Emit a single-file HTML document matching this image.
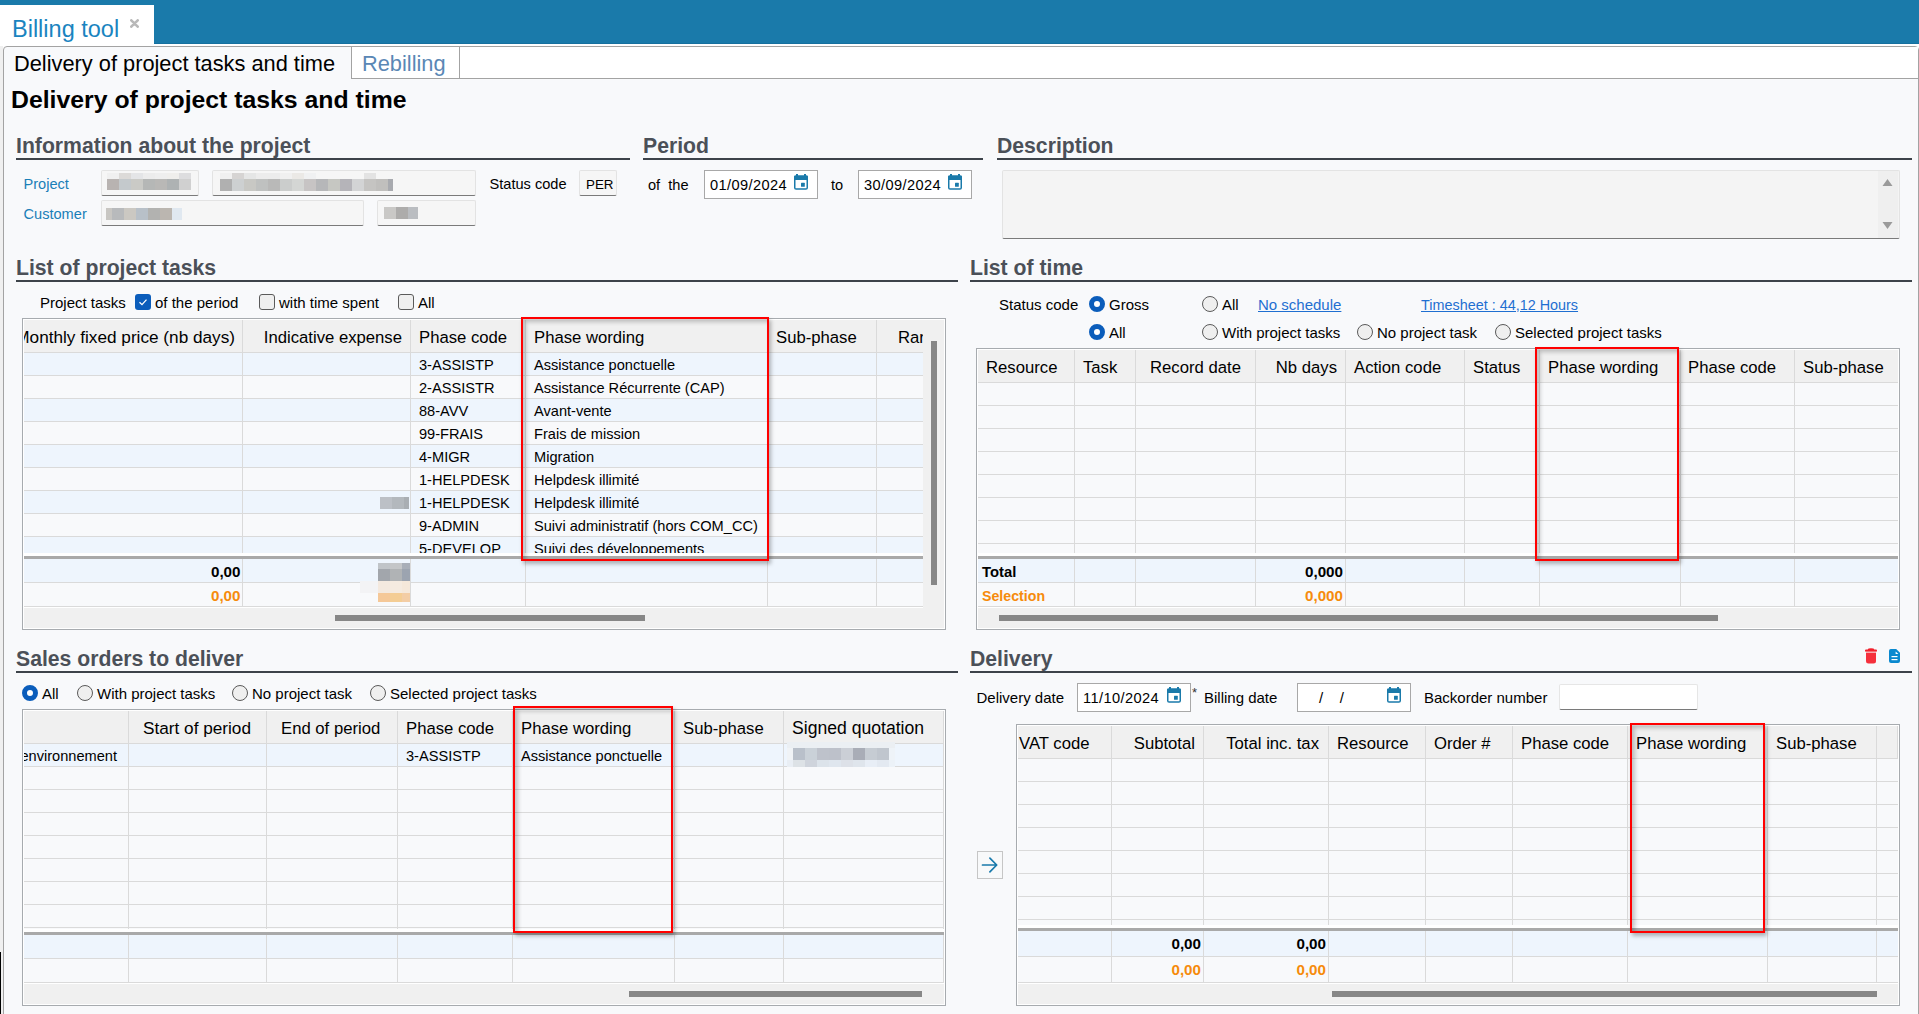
<!DOCTYPE html>
<html><head><meta charset="utf-8"><style>
html,body{margin:0;padding:0;width:1919px;height:1014px;overflow:hidden;background:#fff;font-family:"Liberation Sans", sans-serif;}
body>div,body>svg{position:absolute;}
</style></head><body>
<div style="left:0px;top:0px;width:1919px;height:44px;background:#1a7aaa"></div>
<div style="left:0px;top:43px;width:1919px;height:1px;background:#15709f"></div>
<div style="left:0px;top:5px;width:154px;height:40px;background:#fff"></div>
<div style="left:0px;top:44px;width:1919px;height:2px;background:#fff"></div>
<div style="left:12px;top:18.11px;font-size:23.5px;line-height:23.5px;color:#1a84c0;font-weight:400;white-space:nowrap;">Billing tool</div>
<svg style="left:130px;top:19px" width="9" height="9" viewBox="0 0 9 9"><path d="M1.3 1.3 L7.7 7.7 M7.7 1.3 L1.3 7.7" stroke="#b9b9b9" stroke-width="2.6" stroke-linecap="round"/></svg>
<div style="left:0px;top:46px;width:3px;height:968px;background:#f0f0f0"></div>
<div style="left:3px;top:46px;width:1916px;height:980px;background:#f8f9fb;border:1px solid #a3a3a3;border-radius:4px 4px 0 0;box-sizing:border-box"></div>
<div style="left:351px;top:47px;width:1567px;height:31px;background:#fff"></div>
<div style="left:351px;top:78px;width:1568px;height:1px;background:#a3a3a3"></div>
<div style="left:351px;top:47px;width:1px;height:32px;background:#a3a3a3"></div>
<div style="left:459px;top:47px;width:1px;height:32px;background:#a3a3a3"></div>
<div style="left:14px;top:52.55px;font-size:21.8px;line-height:21.8px;color:#000;font-weight:400;white-space:nowrap;">Delivery of project tasks and time</div>
<div style="left:362px;top:52.55px;font-size:21.8px;line-height:21.8px;color:#5a87b5;font-weight:400;white-space:nowrap;">Rebilling</div>
<div style="left:11px;top:87.51px;font-size:24.8px;line-height:24.8px;color:#000;font-weight:700;white-space:nowrap;">Delivery of project tasks and time</div>
<div style="left:16px;top:134.80px;font-size:21.2px;line-height:21.2px;color:#4b5058;font-weight:700;white-space:nowrap;">Information about the project</div>
<div style="left:16px;top:157.75px;width:614px;height:2px;background:#3d434a"></div>
<div style="left:643px;top:134.80px;font-size:21.2px;line-height:21.2px;color:#4b5058;font-weight:700;white-space:nowrap;">Period</div>
<div style="left:643px;top:157.75px;width:340px;height:2px;background:#3d434a"></div>
<div style="left:997px;top:134.80px;font-size:21.2px;line-height:21.2px;color:#4b5058;font-weight:700;white-space:nowrap;">Description</div>
<div style="left:997px;top:157.75px;width:915px;height:2px;background:#3d434a"></div>
<div style="left:23.5px;top:176.64px;font-size:14.6px;line-height:14.6px;color:#1a7fb8;font-weight:400;white-space:nowrap;">Project</div>
<div style="left:23.5px;top:206.64px;font-size:14.6px;line-height:14.6px;color:#1a7fb8;font-weight:400;white-space:nowrap;">Customer</div>
<div style="left:101px;top:170px;width:98px;height:26px;background:#f6f6f6;border:1px solid #e3e3e3;border-bottom:1px solid #7a7a7a;border-radius:2px;box-sizing:border-box"></div>
<div style="left:212px;top:170px;width:264px;height:26px;background:#f6f6f6;border:1px solid #e3e3e3;border-bottom:1px solid #7a7a7a;border-radius:2px;box-sizing:border-box"></div>
<div style="left:101px;top:200px;width:263px;height:26px;background:#f6f6f6;border:1px solid #e3e3e3;border-bottom:1px solid #7a7a7a;border-radius:2px;box-sizing:border-box"></div>
<div style="left:377px;top:200px;width:99px;height:26px;background:#f6f6f6;border:1px solid #e3e3e3;border-bottom:1px solid #7a7a7a;border-radius:2px;box-sizing:border-box"></div>
<div style="left:107px;top:173px;width:12px;height:6px;background:#f0f0f0"></div>
<div style="left:119px;top:173px;width:12px;height:6px;background:#dcdad8"></div>
<div style="left:131px;top:173px;width:12px;height:6px;background:#e4e5e7"></div>
<div style="left:143px;top:173px;width:12px;height:6px;background:#ececec"></div>
<div style="left:155px;top:173px;width:12px;height:6px;background:#eeeeee"></div>
<div style="left:167px;top:173px;width:12px;height:6px;background:#efeeec"></div>
<div style="left:179px;top:173px;width:12px;height:6px;background:#dddddf"></div>
<div style="left:107px;top:179px;width:12px;height:11px;background:#b8b3b1"></div>
<div style="left:119px;top:179px;width:12px;height:11px;background:#c4c9cc"></div>
<div style="left:131px;top:179px;width:12px;height:11px;background:#cacac6"></div>
<div style="left:143px;top:179px;width:12px;height:11px;background:#b5b7b6"></div>
<div style="left:155px;top:179px;width:12px;height:11px;background:#b9b8b6"></div>
<div style="left:167px;top:179px;width:12px;height:11px;background:#aeb2b3"></div>
<div style="left:179px;top:179px;width:12px;height:11px;background:#d0d0d0"></div>
<div style="left:220px;top:173px;width:12px;height:6px;background:#f0f0f0"></div>
<div style="left:232px;top:173px;width:12px;height:6px;background:#d6d4d3"></div>
<div style="left:244px;top:173px;width:12px;height:6px;background:#e5e6e6"></div>
<div style="left:256px;top:173px;width:12px;height:6px;background:#ececec"></div>
<div style="left:268px;top:173px;width:12px;height:6px;background:#ececec"></div>
<div style="left:280px;top:173px;width:12px;height:6px;background:#f0f0f0"></div>
<div style="left:292px;top:173px;width:12px;height:6px;background:#ebe9e6"></div>
<div style="left:304px;top:173px;width:12px;height:6px;background:#f0f1f2"></div>
<div style="left:364px;top:173px;width:12px;height:6px;background:#e3e3e3"></div>
<div style="left:220px;top:179px;width:12px;height:12px;background:#b0b0b0"></div>
<div style="left:232px;top:179px;width:12px;height:12px;background:#cdd0d1"></div>
<div style="left:244px;top:179px;width:12px;height:12px;background:#c8c8c4"></div>
<div style="left:256px;top:179px;width:12px;height:12px;background:#bfc1c0"></div>
<div style="left:268px;top:179px;width:12px;height:12px;background:#b9b9b8"></div>
<div style="left:280px;top:179px;width:12px;height:12px;background:#cbcdcc"></div>
<div style="left:292px;top:179px;width:12px;height:12px;background:#d4d6d4"></div>
<div style="left:304px;top:179px;width:12px;height:12px;background:#c7c4c4"></div>
<div style="left:316px;top:179px;width:12px;height:12px;background:#b6b7b9"></div>
<div style="left:328px;top:179px;width:12px;height:12px;background:#c6c7c2"></div>
<div style="left:340px;top:179px;width:12px;height:12px;background:#b5b4b9"></div>
<div style="left:352px;top:179px;width:12px;height:12px;background:#d3d4d5"></div>
<div style="left:364px;top:179px;width:12px;height:12px;background:#c5c4c2"></div>
<div style="left:376px;top:179px;width:12px;height:12px;background:#c0bfbd"></div>
<div style="left:388px;top:179px;width:5px;height:12px;background:#a8aaaf"></div>
<div style="left:106px;top:208px;width:6px;height:12px;background:#c8c6c2"></div>
<div style="left:112px;top:208px;width:12px;height:12px;background:#b8babc"></div>
<div style="left:124px;top:208px;width:12px;height:12px;background:#cbc8c2"></div>
<div style="left:136px;top:208px;width:12px;height:12px;background:#b8c0c8"></div>
<div style="left:148px;top:208px;width:12px;height:12px;background:#b2b2b0"></div>
<div style="left:160px;top:208px;width:12px;height:12px;background:#bbb6b0"></div>
<div style="left:172px;top:208px;width:10px;height:12px;background:#e0e8f0"></div>
<div style="left:384px;top:207px;width:12px;height:12px;background:#c9c8c6"></div>
<div style="left:396px;top:207px;width:12px;height:12px;background:#adacab"></div>
<div style="left:408px;top:207px;width:10px;height:12px;background:#babdc1"></div>
<div style="left:489.5px;top:176.64px;font-size:14.6px;line-height:14.6px;color:#000;font-weight:400;white-space:nowrap;">Status code</div>
<div style="left:579px;top:170px;width:38px;height:26px;background:#f6f6f6;border:1px solid #e3e3e3;border-bottom:1px solid #7a7a7a;border-radius:2px;box-sizing:border-box"></div>
<div style="left:586px;top:177.66px;font-size:13.4px;line-height:13.4px;color:#000;font-weight:400;white-space:nowrap;">PER</div>
<div style="left:648px;top:177.64px;font-size:14.6px;line-height:14.6px;color:#000;font-weight:400;white-space:nowrap;">of&nbsp; the</div>
<div style="left:831px;top:177.64px;font-size:14.6px;line-height:14.6px;color:#000;font-weight:400;white-space:nowrap;">to</div>
<div style="left:704px;top:170px;width:114px;height:29px;background:#fff;border:1px solid #a8a8a8;box-sizing:border-box"></div>
<div style="left:710px;top:177.64px;font-size:14.6px;line-height:14.6px;color:#000;font-weight:400;white-space:nowrap;letter-spacing:0.4px">01/09/2024</div>
<svg style="left:794px;top:174px" width="14" height="16" viewBox="0 0 14 16"><rect x="0.75" y="2.35" width="12.5" height="12.7" rx="1.3" fill="none" stroke="#1a7aaa" stroke-width="1.5"/><rect x="0" y="1.6" width="14" height="4.4" rx="1" fill="#1a7aaa"/><rect x="2" y="0" width="2" height="2.5" fill="#1a7aaa"/><rect x="10" y="0" width="2" height="2.5" fill="#1a7aaa"/><rect x="7" y="8.8" width="3.8" height="3.9" rx="0.5" fill="#1a7aaa"/></svg>
<div style="left:858px;top:170px;width:114px;height:29px;background:#fff;border:1px solid #a8a8a8;box-sizing:border-box"></div>
<div style="left:864px;top:177.64px;font-size:14.6px;line-height:14.6px;color:#000;font-weight:400;white-space:nowrap;letter-spacing:0.4px">30/09/2024</div>
<svg style="left:948px;top:174px" width="14" height="16" viewBox="0 0 14 16"><rect x="0.75" y="2.35" width="12.5" height="12.7" rx="1.3" fill="none" stroke="#1a7aaa" stroke-width="1.5"/><rect x="0" y="1.6" width="14" height="4.4" rx="1" fill="#1a7aaa"/><rect x="2" y="0" width="2" height="2.5" fill="#1a7aaa"/><rect x="10" y="0" width="2" height="2.5" fill="#1a7aaa"/><rect x="7" y="8.8" width="3.8" height="3.9" rx="0.5" fill="#1a7aaa"/></svg>
<div style="left:1002px;top:170px;width:898px;height:69px;background:#f4f4f4;border:1px solid #e3e3e3;border-bottom:1px solid #7a7a7a;border-radius:2px;box-sizing:border-box"></div>
<div style="left:1878px;top:171px;width:20px;height:67px;background:#efefef"></div>
<svg style="left:1882px;top:177px" width="11" height="10"><path d="M0.5 9 L5.5 2 L10.5 9 Z" fill="#9a9a9a"/></svg>
<svg style="left:1882px;top:221px" width="11" height="10"><path d="M0.5 1 L5.5 8 L10.5 1 Z" fill="#9a9a9a"/></svg>
<div style="left:16px;top:256.85px;font-size:21.2px;line-height:21.2px;color:#4b5058;font-weight:700;white-space:nowrap;">List of project tasks</div>
<div style="left:16px;top:279.8px;width:942px;height:2px;background:#3d434a"></div>
<div style="left:40px;top:295.30px;font-size:15.0px;line-height:15.0px;color:#000;font-weight:400;white-space:nowrap;">Project tasks</div>
<div style="left:135px;top:294px;width:16px;height:16px;background:#0b5dbb;border-radius:3px"></div>
<svg style="left:135px;top:294px" width="16" height="16"><path d="M4.5 8.2 L7 10.6 L11.5 5.6" fill="none" stroke="#fff" stroke-width="1.3"/></svg>
<div style="left:155px;top:295.30px;font-size:15.0px;line-height:15.0px;color:#000;font-weight:400;white-space:nowrap;">of the period</div>
<div style="left:259px;top:294px;width:16px;height:16px;background:#efefef;border:1px solid #5a5a5a;border-radius:3px;box-sizing:border-box"></div>
<div style="left:279px;top:295.30px;font-size:15.0px;line-height:15.0px;color:#000;font-weight:400;white-space:nowrap;">with time spent</div>
<div style="left:398px;top:294px;width:16px;height:16px;background:#efefef;border:1px solid #5a5a5a;border-radius:3px;box-sizing:border-box"></div>
<div style="left:418px;top:295.30px;font-size:15.0px;line-height:15.0px;color:#000;font-weight:400;white-space:nowrap;">All</div>
<div style="left:22px;top:318px;width:924px;height:312px;background:#fff;border:1px solid #a7abaf;box-sizing:border-box"></div>
<div style="left:24px;top:320px;width:899px;height:32px;background:#f0f0f0"></div>
<div style="left:24px;top:353px;width:899px;height:22px;background:#eef5fd"></div>
<div style="left:24px;top:375px;width:899px;height:1px;background:#dadada"></div>
<div style="left:24px;top:376px;width:899px;height:22px;background:#f8f9fb"></div>
<div style="left:24px;top:398px;width:899px;height:1px;background:#dadada"></div>
<div style="left:24px;top:399px;width:899px;height:22px;background:#eef5fd"></div>
<div style="left:24px;top:421px;width:899px;height:1px;background:#dadada"></div>
<div style="left:24px;top:422px;width:899px;height:22px;background:#f8f9fb"></div>
<div style="left:24px;top:444px;width:899px;height:1px;background:#dadada"></div>
<div style="left:24px;top:445px;width:899px;height:22px;background:#eef5fd"></div>
<div style="left:24px;top:467px;width:899px;height:1px;background:#dadada"></div>
<div style="left:24px;top:468px;width:899px;height:22px;background:#f8f9fb"></div>
<div style="left:24px;top:490px;width:899px;height:1px;background:#dadada"></div>
<div style="left:24px;top:491px;width:899px;height:22px;background:#eef5fd"></div>
<div style="left:24px;top:513px;width:899px;height:1px;background:#dadada"></div>
<div style="left:24px;top:514px;width:899px;height:22px;background:#f8f9fb"></div>
<div style="left:24px;top:536px;width:899px;height:1px;background:#dadada"></div>
<div style="left:24px;top:537px;width:899px;height:16px;background:#eef5fd"></div>
<div style="left:24px;top:352px;width:899px;height:1px;background:#dadada"></div>
<div style="left:24px;top:556px;width:899px;height:3px;background:#a9a9a9"></div>
<div style="left:24px;top:559px;width:899px;height:23px;background:#eef5fd"></div>
<div style="left:24px;top:582px;width:899px;height:1px;background:#dadada"></div>
<div style="left:24px;top:583px;width:899px;height:23px;background:#f8f9fb"></div>
<div style="left:24px;top:606px;width:899px;height:1px;background:#dadada"></div>
<div style="left:24px;top:608px;width:899px;height:20px;background:#f0f0f0"></div>
<div style="left:242px;top:320px;width:1px;height:32px;background:#dadada"></div>
<div style="left:410px;top:320px;width:1px;height:32px;background:#dadada"></div>
<div style="left:525px;top:320px;width:1px;height:32px;background:#dadada"></div>
<div style="left:767px;top:320px;width:1px;height:32px;background:#dadada"></div>
<div style="left:876px;top:320px;width:1px;height:32px;background:#dadada"></div>
<div style="left:242px;top:353px;width:1px;height:200px;background:#dadada"></div>
<div style="left:242px;top:559px;width:1px;height:47px;background:#dadada"></div>
<div style="left:410px;top:353px;width:1px;height:200px;background:#dadada"></div>
<div style="left:410px;top:559px;width:1px;height:47px;background:#dadada"></div>
<div style="left:525px;top:353px;width:1px;height:200px;background:#dadada"></div>
<div style="left:525px;top:559px;width:1px;height:47px;background:#dadada"></div>
<div style="left:767px;top:353px;width:1px;height:200px;background:#dadada"></div>
<div style="left:767px;top:559px;width:1px;height:47px;background:#dadada"></div>
<div style="left:876px;top:353px;width:1px;height:200px;background:#dadada"></div>
<div style="left:876px;top:559px;width:1px;height:47px;background:#dadada"></div>
<div style="left:335px;top:615px;width:310px;height:6px;background:#878787"></div>
<div style="left:923px;top:320px;width:21px;height:308px;background:#f0f0f0"></div>
<div style="left:931px;top:341px;width:6px;height:244px;background:#878787"></div>
<div style="left:24px;top:0;width:218px;height:1014px;overflow:hidden"><div style="position:absolute;left:-24px;top:0;width:1919px;height:1014px"><div style="position:absolute;left:-365px;top:329.44px;width:600px;text-align:right;font-size:17.2px;line-height:17.2px;color:#000;font-weight:400;white-space:nowrap">Monthly fixed price (nb days)</div></div></div>
<div style="left:-198px;top:329.86px;width:600px;text-align:right;font-size:16.7px;line-height:16.7px;color:#000;font-weight:400;white-space:nowrap;">Indicative expense</div>
<div style="left:419px;top:329.86px;font-size:16.7px;line-height:16.7px;color:#000;font-weight:400;white-space:nowrap;">Phase code</div>
<div style="left:534px;top:329.86px;font-size:16.7px;line-height:16.7px;color:#000;font-weight:400;white-space:nowrap;">Phase wording</div>
<div style="left:776px;top:329.86px;font-size:16.7px;line-height:16.7px;color:#000;font-weight:400;white-space:nowrap;">Sub-phase</div>
<div style="left:876px;top:0;width:47px;height:1014px;overflow:hidden"><div style="position:absolute;left:-876px;top:0;width:1919px;height:1014px"><div style="position:absolute;left:898px;top:329.86px;font-size:16.7px;line-height:16.7px;color:#000;font-weight:400;white-space:nowrap">Rar</div></div></div>
<div style="left:419px;top:358.24px;font-size:14.6px;line-height:14.6px;color:#000;font-weight:400;white-space:nowrap;">3-ASSISTP</div>
<div style="left:534px;top:358.24px;font-size:14.6px;line-height:14.6px;color:#000;font-weight:400;white-space:nowrap;">Assistance ponctuelle</div>
<div style="left:419px;top:381.24px;font-size:14.6px;line-height:14.6px;color:#000;font-weight:400;white-space:nowrap;">2-ASSISTR</div>
<div style="left:534px;top:381.24px;font-size:14.6px;line-height:14.6px;color:#000;font-weight:400;white-space:nowrap;">Assistance R&#233;currente (CAP)</div>
<div style="left:419px;top:404.24px;font-size:14.6px;line-height:14.6px;color:#000;font-weight:400;white-space:nowrap;">88-AVV</div>
<div style="left:534px;top:404.24px;font-size:14.6px;line-height:14.6px;color:#000;font-weight:400;white-space:nowrap;">Avant-vente</div>
<div style="left:419px;top:427.24px;font-size:14.6px;line-height:14.6px;color:#000;font-weight:400;white-space:nowrap;">99-FRAIS</div>
<div style="left:534px;top:427.24px;font-size:14.6px;line-height:14.6px;color:#000;font-weight:400;white-space:nowrap;">Frais de mission</div>
<div style="left:419px;top:450.24px;font-size:14.6px;line-height:14.6px;color:#000;font-weight:400;white-space:nowrap;">4-MIGR</div>
<div style="left:534px;top:450.24px;font-size:14.6px;line-height:14.6px;color:#000;font-weight:400;white-space:nowrap;">Migration</div>
<div style="left:419px;top:473.24px;font-size:14.6px;line-height:14.6px;color:#000;font-weight:400;white-space:nowrap;">1-HELPDESK</div>
<div style="left:534px;top:473.24px;font-size:14.6px;line-height:14.6px;color:#000;font-weight:400;white-space:nowrap;">Helpdesk illimit&#233;</div>
<div style="left:419px;top:496.24px;font-size:14.6px;line-height:14.6px;color:#000;font-weight:400;white-space:nowrap;">1-HELPDESK</div>
<div style="left:534px;top:496.24px;font-size:14.6px;line-height:14.6px;color:#000;font-weight:400;white-space:nowrap;">Helpdesk illimit&#233;</div>
<div style="left:419px;top:519.24px;font-size:14.6px;line-height:14.6px;color:#000;font-weight:400;white-space:nowrap;">9-ADMIN</div>
<div style="left:534px;top:519.24px;font-size:14.6px;line-height:14.6px;color:#000;font-weight:400;white-space:nowrap;">Suivi administratif (hors COM_CC)</div>
<div style="left:0;top:0;width:1919px;height:553px;overflow:hidden"><div style="position:absolute;left:419px;top:542.24px;font-size:14.6px;line-height:14.6px;color:#000;font-weight:400;white-space:nowrap">5-DEVELOP</div><div style="position:absolute;left:534px;top:542.24px;font-size:14.6px;line-height:14.6px;color:#000;font-weight:400;white-space:nowrap">Suivi des d&#233;veloppements</div></div>
<div style="left:380px;top:497px;width:12px;height:12px;background:#bcc0c6"></div>
<div style="left:392px;top:497px;width:12px;height:12px;background:#b3b8bd"></div>
<div style="left:404px;top:497px;width:5px;height:12px;background:#a9aeb3"></div>
<div style="left:-359.5px;top:564.13px;width:600px;text-align:right;font-size:15.2px;line-height:15.2px;color:#000;font-weight:700;white-space:nowrap;">0,00</div>
<div style="left:-359.5px;top:588.13px;width:600px;text-align:right;font-size:15.2px;line-height:15.2px;color:#f68b0c;font-weight:700;white-space:nowrap;">0,00</div>
<div style="left:378px;top:563px;width:12px;height:6px;background:#c0c4c8"></div>
<div style="left:390px;top:563px;width:12px;height:6px;background:#c4c6c8"></div>
<div style="left:402px;top:563px;width:8px;height:6px;background:#a8aeb8"></div>
<div style="left:378px;top:569px;width:12px;height:12px;background:#a2a6ac"></div>
<div style="left:390px;top:569px;width:12px;height:12px;background:#b0b3b5"></div>
<div style="left:402px;top:569px;width:8px;height:12px;background:#9ca4b0"></div>
<div style="left:360px;top:581px;width:18px;height:12px;background:#f3f3f5"></div>
<div style="left:378px;top:581px;width:12px;height:12px;background:#f4e9df"></div>
<div style="left:390px;top:581px;width:12px;height:12px;background:#f5ebe0"></div>
<div style="left:402px;top:581px;width:8px;height:12px;background:#f5e8da"></div>
<div style="left:378px;top:593px;width:12px;height:9px;background:#f5c898"></div>
<div style="left:390px;top:593px;width:12px;height:9px;background:#f4cd94"></div>
<div style="left:402px;top:593px;width:8px;height:9px;background:#f3cda5"></div>
<div style="left:521px;top:317px;width:248px;height:244px;border:2px solid #ff0000;box-sizing:border-box;box-shadow:2px 3px 4px rgba(0,0,0,0.28), inset 3px 3px 4px rgba(0,0,0,0.22)"></div>
<div style="left:970px;top:256.85px;font-size:21.2px;line-height:21.2px;color:#4b5058;font-weight:700;white-space:nowrap;">List of time</div>
<div style="left:970px;top:279.8px;width:942px;height:2px;background:#3d434a"></div>
<div style="left:999px;top:297.30px;font-size:15.0px;line-height:15.0px;color:#000;font-weight:400;white-space:nowrap;">Status code</div>
<div style="left:1089px;top:296px;width:16px;height:16px;background:#fff;border:5px solid #0b5dbb;border-radius:50%;box-sizing:border-box"></div>
<div style="left:1109px;top:297.30px;font-size:15.0px;line-height:15.0px;color:#000;font-weight:400;white-space:nowrap;">Gross</div>
<div style="left:1202px;top:296px;width:16px;height:16px;background:#efefef;border:1px solid #5a5a5a;border-radius:50%;box-sizing:border-box"></div>
<div style="left:1222px;top:297.30px;font-size:15.0px;line-height:15.0px;color:#000;font-weight:400;white-space:nowrap;">All</div>
<div style="left:1258px;top:297.30px;font-size:15.0px;line-height:15.0px;color:#1f6fd1;font-weight:400;white-space:nowrap;text-decoration:underline">No schedule</div>
<div style="left:1421px;top:297.81px;font-size:14.4px;line-height:14.4px;color:#1f6fd1;font-weight:400;white-space:nowrap;text-decoration:underline">Timesheet : 44,12 Hours</div>
<div style="left:1089px;top:324px;width:16px;height:16px;background:#fff;border:5px solid #0b5dbb;border-radius:50%;box-sizing:border-box"></div>
<div style="left:1109px;top:325.30px;font-size:15.0px;line-height:15.0px;color:#000;font-weight:400;white-space:nowrap;">All</div>
<div style="left:1202px;top:324px;width:16px;height:16px;background:#efefef;border:1px solid #5a5a5a;border-radius:50%;box-sizing:border-box"></div>
<div style="left:1222px;top:325.30px;font-size:15.0px;line-height:15.0px;color:#000;font-weight:400;white-space:nowrap;">With project tasks</div>
<div style="left:1357px;top:324px;width:16px;height:16px;background:#efefef;border:1px solid #5a5a5a;border-radius:50%;box-sizing:border-box"></div>
<div style="left:1377px;top:325.30px;font-size:15.0px;line-height:15.0px;color:#000;font-weight:400;white-space:nowrap;">No project task</div>
<div style="left:1495px;top:324px;width:16px;height:16px;background:#efefef;border:1px solid #5a5a5a;border-radius:50%;box-sizing:border-box"></div>
<div style="left:1515px;top:325.30px;font-size:15.0px;line-height:15.0px;color:#000;font-weight:400;white-space:nowrap;">Selected project tasks</div>
<div style="left:976px;top:348px;width:924px;height:282px;background:#fff;border:1px solid #a7abaf;box-sizing:border-box"></div>
<div style="left:978px;top:350px;width:920px;height:32px;background:#f0f0f0"></div>
<div style="left:978px;top:383px;width:920px;height:22px;background:#f8f9fb"></div>
<div style="left:978px;top:405px;width:920px;height:1px;background:#dadada"></div>
<div style="left:978px;top:406px;width:920px;height:22px;background:#f8f9fb"></div>
<div style="left:978px;top:428px;width:920px;height:1px;background:#dadada"></div>
<div style="left:978px;top:429px;width:920px;height:22px;background:#f8f9fb"></div>
<div style="left:978px;top:451px;width:920px;height:1px;background:#dadada"></div>
<div style="left:978px;top:452px;width:920px;height:22px;background:#f8f9fb"></div>
<div style="left:978px;top:474px;width:920px;height:1px;background:#dadada"></div>
<div style="left:978px;top:475px;width:920px;height:22px;background:#f8f9fb"></div>
<div style="left:978px;top:497px;width:920px;height:1px;background:#dadada"></div>
<div style="left:978px;top:498px;width:920px;height:22px;background:#f8f9fb"></div>
<div style="left:978px;top:520px;width:920px;height:1px;background:#dadada"></div>
<div style="left:978px;top:521px;width:920px;height:22px;background:#f8f9fb"></div>
<div style="left:978px;top:543px;width:920px;height:1px;background:#dadada"></div>
<div style="left:978px;top:544px;width:920px;height:9px;background:#f8f9fb"></div>
<div style="left:978px;top:382px;width:920px;height:1px;background:#dadada"></div>
<div style="left:978px;top:556px;width:920px;height:3px;background:#a9a9a9"></div>
<div style="left:978px;top:559px;width:920px;height:23px;background:#eef5fd"></div>
<div style="left:978px;top:582px;width:920px;height:1px;background:#dadada"></div>
<div style="left:978px;top:583px;width:920px;height:23px;background:#f8f9fb"></div>
<div style="left:978px;top:606px;width:920px;height:1px;background:#dadada"></div>
<div style="left:978px;top:608px;width:920px;height:20px;background:#f0f0f0"></div>
<div style="left:1074px;top:350px;width:1px;height:32px;background:#dadada"></div>
<div style="left:1135px;top:350px;width:1px;height:32px;background:#dadada"></div>
<div style="left:1255px;top:350px;width:1px;height:32px;background:#dadada"></div>
<div style="left:1345px;top:350px;width:1px;height:32px;background:#dadada"></div>
<div style="left:1464px;top:350px;width:1px;height:32px;background:#dadada"></div>
<div style="left:1539px;top:350px;width:1px;height:32px;background:#dadada"></div>
<div style="left:1680px;top:350px;width:1px;height:32px;background:#dadada"></div>
<div style="left:1794px;top:350px;width:1px;height:32px;background:#dadada"></div>
<div style="left:1074px;top:383px;width:1px;height:170px;background:#dadada"></div>
<div style="left:1074px;top:559px;width:1px;height:47px;background:#dadada"></div>
<div style="left:1135px;top:383px;width:1px;height:170px;background:#dadada"></div>
<div style="left:1135px;top:559px;width:1px;height:47px;background:#dadada"></div>
<div style="left:1255px;top:383px;width:1px;height:170px;background:#dadada"></div>
<div style="left:1255px;top:559px;width:1px;height:47px;background:#dadada"></div>
<div style="left:1345px;top:383px;width:1px;height:170px;background:#dadada"></div>
<div style="left:1345px;top:559px;width:1px;height:47px;background:#dadada"></div>
<div style="left:1464px;top:383px;width:1px;height:170px;background:#dadada"></div>
<div style="left:1464px;top:559px;width:1px;height:47px;background:#dadada"></div>
<div style="left:1539px;top:383px;width:1px;height:170px;background:#dadada"></div>
<div style="left:1539px;top:559px;width:1px;height:47px;background:#dadada"></div>
<div style="left:1680px;top:383px;width:1px;height:170px;background:#dadada"></div>
<div style="left:1680px;top:559px;width:1px;height:47px;background:#dadada"></div>
<div style="left:1794px;top:383px;width:1px;height:170px;background:#dadada"></div>
<div style="left:1794px;top:559px;width:1px;height:47px;background:#dadada"></div>
<div style="left:999px;top:615px;width:719px;height:6px;background:#878787"></div>
<div style="left:986px;top:360.36px;font-size:16.7px;line-height:16.7px;color:#000;font-weight:400;white-space:nowrap;">Resource</div>
<div style="left:1083px;top:360.36px;font-size:16.7px;line-height:16.7px;color:#000;font-weight:400;white-space:nowrap;">Task</div>
<div style="left:1150px;top:360.36px;font-size:16.7px;line-height:16.7px;color:#000;font-weight:400;white-space:nowrap;">Record date</div>
<div style="left:737px;top:360.36px;width:600px;text-align:right;font-size:16.7px;line-height:16.7px;color:#000;font-weight:400;white-space:nowrap;">Nb days</div>
<div style="left:1354px;top:360.36px;font-size:16.7px;line-height:16.7px;color:#000;font-weight:400;white-space:nowrap;">Action code</div>
<div style="left:1473px;top:360.36px;font-size:16.7px;line-height:16.7px;color:#000;font-weight:400;white-space:nowrap;">Status</div>
<div style="left:1548px;top:360.36px;font-size:16.7px;line-height:16.7px;color:#000;font-weight:400;white-space:nowrap;">Phase wording</div>
<div style="left:1688px;top:360.36px;font-size:16.7px;line-height:16.7px;color:#000;font-weight:400;white-space:nowrap;">Phase code</div>
<div style="left:1803px;top:360.36px;font-size:16.7px;line-height:16.7px;color:#000;font-weight:400;white-space:nowrap;">Sub-phase</div>
<div style="left:982px;top:565.47px;font-size:14.8px;line-height:14.8px;color:#000;font-weight:700;white-space:nowrap;">Total</div>
<div style="left:982px;top:589.48px;font-size:14.2px;line-height:14.2px;color:#f68b0c;font-weight:700;white-space:nowrap;">Selection</div>
<div style="left:743px;top:564.13px;width:600px;text-align:right;font-size:15.2px;line-height:15.2px;color:#000;font-weight:700;white-space:nowrap;">0,000</div>
<div style="left:743px;top:588.13px;width:600px;text-align:right;font-size:15.2px;line-height:15.2px;color:#f68b0c;font-weight:700;white-space:nowrap;">0,000</div>
<div style="left:1535px;top:347px;width:144px;height:214px;border:2px solid #ff0000;box-sizing:border-box;box-shadow:2px 3px 4px rgba(0,0,0,0.28), inset 3px 3px 4px rgba(0,0,0,0.22)"></div>
<div style="left:16px;top:647.85px;font-size:21.2px;line-height:21.2px;color:#4b5058;font-weight:700;white-space:nowrap;">Sales orders to deliver</div>
<div style="left:16px;top:670.8px;width:942px;height:2px;background:#3d434a"></div>
<div style="left:22px;top:685px;width:16px;height:16px;background:#fff;border:5px solid #0b5dbb;border-radius:50%;box-sizing:border-box"></div>
<div style="left:42px;top:686.30px;font-size:15.0px;line-height:15.0px;color:#000;font-weight:400;white-space:nowrap;">All</div>
<div style="left:77px;top:685px;width:16px;height:16px;background:#efefef;border:1px solid #5a5a5a;border-radius:50%;box-sizing:border-box"></div>
<div style="left:97px;top:686.30px;font-size:15.0px;line-height:15.0px;color:#000;font-weight:400;white-space:nowrap;">With project tasks</div>
<div style="left:232px;top:685px;width:16px;height:16px;background:#efefef;border:1px solid #5a5a5a;border-radius:50%;box-sizing:border-box"></div>
<div style="left:252px;top:686.30px;font-size:15.0px;line-height:15.0px;color:#000;font-weight:400;white-space:nowrap;">No project task</div>
<div style="left:370px;top:685px;width:16px;height:16px;background:#efefef;border:1px solid #5a5a5a;border-radius:50%;box-sizing:border-box"></div>
<div style="left:390px;top:686.30px;font-size:15.0px;line-height:15.0px;color:#000;font-weight:400;white-space:nowrap;">Selected project tasks</div>
<div style="left:22px;top:709px;width:924px;height:297px;background:#fff;border:1px solid #a7abaf;box-sizing:border-box"></div>
<div style="left:24px;top:711px;width:920px;height:32px;background:#f0f0f0"></div>
<div style="left:24px;top:744px;width:920px;height:22px;background:#eef5fd"></div>
<div style="left:24px;top:766px;width:920px;height:1px;background:#dadada"></div>
<div style="left:24px;top:767px;width:920px;height:22px;background:#f8f9fb"></div>
<div style="left:24px;top:789px;width:920px;height:1px;background:#dadada"></div>
<div style="left:24px;top:790px;width:920px;height:22px;background:#f8f9fb"></div>
<div style="left:24px;top:812px;width:920px;height:1px;background:#dadada"></div>
<div style="left:24px;top:813px;width:920px;height:22px;background:#f8f9fb"></div>
<div style="left:24px;top:835px;width:920px;height:1px;background:#dadada"></div>
<div style="left:24px;top:836px;width:920px;height:22px;background:#f8f9fb"></div>
<div style="left:24px;top:858px;width:920px;height:1px;background:#dadada"></div>
<div style="left:24px;top:859px;width:920px;height:22px;background:#f8f9fb"></div>
<div style="left:24px;top:881px;width:920px;height:1px;background:#dadada"></div>
<div style="left:24px;top:882px;width:920px;height:22px;background:#f8f9fb"></div>
<div style="left:24px;top:904px;width:920px;height:1px;background:#dadada"></div>
<div style="left:24px;top:905px;width:920px;height:22px;background:#f8f9fb"></div>
<div style="left:24px;top:927px;width:920px;height:1px;background:#dadada"></div>
<div style="left:24px;top:928px;width:920px;height:1px;background:#f8f9fb"></div>
<div style="left:24px;top:743px;width:920px;height:1px;background:#dadada"></div>
<div style="left:24px;top:932px;width:920px;height:3px;background:#a9a9a9"></div>
<div style="left:24px;top:935px;width:920px;height:23px;background:#eef5fd"></div>
<div style="left:24px;top:958px;width:920px;height:1px;background:#dadada"></div>
<div style="left:24px;top:959px;width:920px;height:23px;background:#f8f9fb"></div>
<div style="left:24px;top:982px;width:920px;height:1px;background:#dadada"></div>
<div style="left:24px;top:984px;width:920px;height:20px;background:#f0f0f0"></div>
<div style="left:128px;top:711px;width:1px;height:32px;background:#dadada"></div>
<div style="left:266px;top:711px;width:1px;height:32px;background:#dadada"></div>
<div style="left:397px;top:711px;width:1px;height:32px;background:#dadada"></div>
<div style="left:512px;top:711px;width:1px;height:32px;background:#dadada"></div>
<div style="left:674px;top:711px;width:1px;height:32px;background:#dadada"></div>
<div style="left:783px;top:711px;width:1px;height:32px;background:#dadada"></div>
<div style="left:943px;top:711px;width:1px;height:32px;background:#dadada"></div>
<div style="left:128px;top:744px;width:1px;height:185px;background:#dadada"></div>
<div style="left:128px;top:935px;width:1px;height:47px;background:#dadada"></div>
<div style="left:266px;top:744px;width:1px;height:185px;background:#dadada"></div>
<div style="left:266px;top:935px;width:1px;height:47px;background:#dadada"></div>
<div style="left:397px;top:744px;width:1px;height:185px;background:#dadada"></div>
<div style="left:397px;top:935px;width:1px;height:47px;background:#dadada"></div>
<div style="left:512px;top:744px;width:1px;height:185px;background:#dadada"></div>
<div style="left:512px;top:935px;width:1px;height:47px;background:#dadada"></div>
<div style="left:674px;top:744px;width:1px;height:185px;background:#dadada"></div>
<div style="left:674px;top:935px;width:1px;height:47px;background:#dadada"></div>
<div style="left:783px;top:744px;width:1px;height:185px;background:#dadada"></div>
<div style="left:783px;top:935px;width:1px;height:47px;background:#dadada"></div>
<div style="left:943px;top:744px;width:1px;height:185px;background:#dadada"></div>
<div style="left:943px;top:935px;width:1px;height:47px;background:#dadada"></div>
<div style="left:629px;top:991px;width:293px;height:6px;background:#878787"></div>
<div style="left:143px;top:720.44px;font-size:17.2px;line-height:17.2px;color:#000;font-weight:400;white-space:nowrap;">Start of period</div>
<div style="left:281px;top:720.86px;font-size:16.7px;line-height:16.7px;color:#000;font-weight:400;white-space:nowrap;">End of period</div>
<div style="left:406px;top:720.86px;font-size:16.7px;line-height:16.7px;color:#000;font-weight:400;white-space:nowrap;">Phase code</div>
<div style="left:521px;top:720.86px;font-size:16.7px;line-height:16.7px;color:#000;font-weight:400;white-space:nowrap;">Phase wording</div>
<div style="left:683px;top:720.86px;font-size:16.7px;line-height:16.7px;color:#000;font-weight:400;white-space:nowrap;">Sub-phase</div>
<div style="left:792px;top:720.10px;font-size:17.6px;line-height:17.6px;color:#000;font-weight:400;white-space:nowrap;">Signed quotation</div>
<div style="left:24px;top:0;width:104px;height:1014px;overflow:hidden"><div style="position:absolute;left:-24px;top:0;width:1919px;height:1014px"><div style="position:absolute;left:-483px;top:748.64px;width:600px;text-align:right;font-size:14.6px;line-height:14.6px;color:#000;font-weight:400;white-space:nowrap">environnement</div></div></div>
<div style="left:406px;top:748.64px;font-size:14.6px;line-height:14.6px;color:#000;font-weight:400;white-space:nowrap;">3-ASSISTP</div>
<div style="left:521px;top:748.64px;font-size:14.6px;line-height:14.6px;color:#000;font-weight:400;white-space:nowrap;">Assistance ponctuelle</div>
<div style="left:787px;top:742px;width:108px;height:6px;background:#ebeff3"></div>
<div style="left:787px;top:748px;width:6px;height:12px;background:#f0f3f6"></div>
<div style="left:793px;top:748px;width:12px;height:12px;background:#b9c0ca"></div>
<div style="left:805px;top:748px;width:12px;height:12px;background:#cad1d8"></div>
<div style="left:817px;top:748px;width:12px;height:12px;background:#bec2cb"></div>
<div style="left:829px;top:748px;width:12px;height:12px;background:#bdc1ca"></div>
<div style="left:841px;top:748px;width:12px;height:12px;background:#cbcfd6"></div>
<div style="left:853px;top:748px;width:12px;height:12px;background:#a9adb7"></div>
<div style="left:865px;top:748px;width:12px;height:12px;background:#c6ccd3"></div>
<div style="left:877px;top:748px;width:12px;height:12px;background:#c0c6ce"></div>
<div style="left:889px;top:748px;width:6px;height:12px;background:#eef3f8"></div>
<div style="left:787px;top:760px;width:6px;height:7px;background:#e9eef4"></div>
<div style="left:793px;top:760px;width:12px;height:7px;background:#dde2e6"></div>
<div style="left:805px;top:760px;width:12px;height:7px;background:#cfd4dc"></div>
<div style="left:817px;top:760px;width:12px;height:7px;background:#dce3ea"></div>
<div style="left:829px;top:760px;width:12px;height:7px;background:#dfe6ee"></div>
<div style="left:841px;top:760px;width:12px;height:7px;background:#dde1e8"></div>
<div style="left:853px;top:760px;width:12px;height:7px;background:#dfe5ec"></div>
<div style="left:865px;top:760px;width:12px;height:7px;background:#e8eef6"></div>
<div style="left:877px;top:760px;width:12px;height:7px;background:#e3e9f1"></div>
<div style="left:889px;top:760px;width:6px;height:7px;background:#ecf2f8"></div>
<div style="left:513px;top:706px;width:160px;height:227px;border:2px solid #ff0000;box-sizing:border-box;box-shadow:2px 3px 4px rgba(0,0,0,0.28), inset 3px 3px 4px rgba(0,0,0,0.22)"></div>
<div style="left:970px;top:647.85px;font-size:21.2px;line-height:21.2px;color:#4b5058;font-weight:700;white-space:nowrap;">Delivery</div>
<div style="left:970px;top:670.8px;width:942px;height:2px;background:#3d434a"></div>
<div style="left:976.5px;top:689.80px;font-size:15.0px;line-height:15.0px;color:#000;font-weight:400;white-space:nowrap;">Delivery date</div>
<div style="left:1077px;top:683px;width:114px;height:29px;background:#fff;border:1px solid #a8a8a8;box-sizing:border-box"></div>
<div style="left:1083px;top:690.64px;font-size:14.6px;line-height:14.6px;color:#000;font-weight:400;white-space:nowrap;letter-spacing:0.4px">11/10/2024</div>
<svg style="left:1167px;top:687px" width="14" height="16" viewBox="0 0 14 16"><rect x="0.75" y="2.35" width="12.5" height="12.7" rx="1.3" fill="none" stroke="#1a7aaa" stroke-width="1.5"/><rect x="0" y="1.6" width="14" height="4.4" rx="1" fill="#1a7aaa"/><rect x="2" y="0" width="2" height="2.5" fill="#1a7aaa"/><rect x="10" y="0" width="2" height="2.5" fill="#1a7aaa"/><rect x="7" y="8.8" width="3.8" height="3.9" rx="0.5" fill="#1a7aaa"/></svg>
<div style="left:1192px;top:686.00px;font-size:13px;line-height:13px;color:#333;font-weight:400;white-space:nowrap;">*</div>
<div style="left:1204px;top:689.80px;font-size:15.0px;line-height:15.0px;color:#000;font-weight:400;white-space:nowrap;">Billing date</div>
<div style="left:1297px;top:683px;width:114px;height:29px;background:#fff;border:1px solid #a8a8a8;box-sizing:border-box"></div>
<svg style="left:1387px;top:687px" width="14" height="16" viewBox="0 0 14 16"><rect x="0.75" y="2.35" width="12.5" height="12.7" rx="1.3" fill="none" stroke="#1a7aaa" stroke-width="1.5"/><rect x="0" y="1.6" width="14" height="4.4" rx="1" fill="#1a7aaa"/><rect x="2" y="0" width="2" height="2.5" fill="#1a7aaa"/><rect x="10" y="0" width="2" height="2.5" fill="#1a7aaa"/><rect x="7" y="8.8" width="3.8" height="3.9" rx="0.5" fill="#1a7aaa"/></svg>
<div style="left:1319px;top:689.80px;font-size:15.0px;line-height:15.0px;color:#000;font-weight:400;white-space:nowrap;">/&nbsp;&nbsp;&nbsp;&nbsp;/</div>
<div style="left:1424px;top:689.80px;font-size:15.0px;line-height:15.0px;color:#000;font-weight:400;white-space:nowrap;">Backorder number</div>
<div style="left:1559px;top:684px;width:139px;height:26px;background:#fff;border:1px solid #e6e6e6;border-bottom:1px solid #7a7a7a;border-radius:2px;box-sizing:border-box"></div>
<svg style="left:1865px;top:648px" width="12" height="16" viewBox="0 0 12 16"><ellipse cx="6" cy="1.6" rx="3.2" ry="1.3" fill="#f21f2b"/><rect x="0" y="1.5" width="12" height="2.2" rx="1" fill="#f21f2b"/><rect x="1" y="3.7" width="10" height="1.2" fill="#f7a3a9"/><path d="M1 4.9 H11 V13 Q11 15.5 8.5 15.5 H3.5 Q1 15.5 1 13 Z" fill="#f5303c"/></svg>
<svg style="left:1888.5px;top:649px" width="11" height="14" viewBox="0 0 11 14"><path d="M1.8 0 H7.2 L11 3.8 V12 Q11 14 9 14 H2 Q0 14 0 12 V1.8 Q0 0 1.8 0 Z" fill="#0a89cf"/><path d="M6.6 2.4 V5 H9.4 Z" fill="#fff"/><rect x="2.5" y="7" width="6" height="1.2" fill="#fff"/><rect x="2.5" y="10" width="6" height="1.2" fill="#fff"/></svg>
<div style="left:977px;top:851px;width:26px;height:28px;background:#f8f9fa;border:1px solid #c6c6c6;box-sizing:border-box"></div>
<svg style="left:977px;top:851px" width="26" height="28" viewBox="0 0 26 28"><path d="M5.5 14 H19.6 M12.9 7.2 L19.7 14 L12.9 20.8" fill="none" stroke="#1879ab" stroke-width="1.7" stroke-linecap="round" stroke-linejoin="round"/></svg>
<div style="left:1016px;top:724px;width:884px;height:282px;background:#fff;border:1px solid #a7abaf;box-sizing:border-box"></div>
<div style="left:1018px;top:726px;width:880px;height:32px;background:#f0f0f0"></div>
<div style="left:1018px;top:759px;width:880px;height:22px;background:#f8f9fb"></div>
<div style="left:1018px;top:781px;width:880px;height:1px;background:#dadada"></div>
<div style="left:1018px;top:782px;width:880px;height:22px;background:#f8f9fb"></div>
<div style="left:1018px;top:804px;width:880px;height:1px;background:#dadada"></div>
<div style="left:1018px;top:805px;width:880px;height:22px;background:#f8f9fb"></div>
<div style="left:1018px;top:827px;width:880px;height:1px;background:#dadada"></div>
<div style="left:1018px;top:828px;width:880px;height:22px;background:#f8f9fb"></div>
<div style="left:1018px;top:850px;width:880px;height:1px;background:#dadada"></div>
<div style="left:1018px;top:851px;width:880px;height:22px;background:#f8f9fb"></div>
<div style="left:1018px;top:873px;width:880px;height:1px;background:#dadada"></div>
<div style="left:1018px;top:874px;width:880px;height:22px;background:#f8f9fb"></div>
<div style="left:1018px;top:896px;width:880px;height:1px;background:#dadada"></div>
<div style="left:1018px;top:897px;width:880px;height:22px;background:#f8f9fb"></div>
<div style="left:1018px;top:919px;width:880px;height:1px;background:#dadada"></div>
<div style="left:1018px;top:920px;width:880px;height:5px;background:#f8f9fb"></div>
<div style="left:1018px;top:758px;width:880px;height:1px;background:#dadada"></div>
<div style="left:1018px;top:928px;width:880px;height:3px;background:#a9a9a9"></div>
<div style="left:1018px;top:931px;width:880px;height:25px;background:#eef5fd"></div>
<div style="left:1018px;top:956px;width:880px;height:1px;background:#dadada"></div>
<div style="left:1018px;top:957px;width:880px;height:25px;background:#f8f9fb"></div>
<div style="left:1018px;top:982px;width:880px;height:1px;background:#dadada"></div>
<div style="left:1018px;top:984px;width:880px;height:20px;background:#f0f0f0"></div>
<div style="left:1111px;top:726px;width:1px;height:32px;background:#dadada"></div>
<div style="left:1203px;top:726px;width:1px;height:32px;background:#dadada"></div>
<div style="left:1328px;top:726px;width:1px;height:32px;background:#dadada"></div>
<div style="left:1425px;top:726px;width:1px;height:32px;background:#dadada"></div>
<div style="left:1512px;top:726px;width:1px;height:32px;background:#dadada"></div>
<div style="left:1627px;top:726px;width:1px;height:32px;background:#dadada"></div>
<div style="left:1767px;top:726px;width:1px;height:32px;background:#dadada"></div>
<div style="left:1876px;top:726px;width:1px;height:32px;background:#dadada"></div>
<div style="left:1897px;top:726px;width:1px;height:32px;background:#dadada"></div>
<div style="left:1111px;top:759px;width:1px;height:166px;background:#dadada"></div>
<div style="left:1111px;top:931px;width:1px;height:51px;background:#dadada"></div>
<div style="left:1203px;top:759px;width:1px;height:166px;background:#dadada"></div>
<div style="left:1203px;top:931px;width:1px;height:51px;background:#dadada"></div>
<div style="left:1328px;top:759px;width:1px;height:166px;background:#dadada"></div>
<div style="left:1328px;top:931px;width:1px;height:51px;background:#dadada"></div>
<div style="left:1425px;top:759px;width:1px;height:166px;background:#dadada"></div>
<div style="left:1425px;top:931px;width:1px;height:51px;background:#dadada"></div>
<div style="left:1512px;top:759px;width:1px;height:166px;background:#dadada"></div>
<div style="left:1512px;top:931px;width:1px;height:51px;background:#dadada"></div>
<div style="left:1627px;top:759px;width:1px;height:166px;background:#dadada"></div>
<div style="left:1627px;top:931px;width:1px;height:51px;background:#dadada"></div>
<div style="left:1767px;top:759px;width:1px;height:166px;background:#dadada"></div>
<div style="left:1767px;top:931px;width:1px;height:51px;background:#dadada"></div>
<div style="left:1876px;top:759px;width:1px;height:166px;background:#dadada"></div>
<div style="left:1876px;top:931px;width:1px;height:51px;background:#dadada"></div>
<div style="left:1332px;top:991px;width:545px;height:6px;background:#878787"></div>
<div style="left:1019px;top:735.86px;font-size:16.7px;line-height:16.7px;color:#000;font-weight:400;white-space:nowrap;">VAT code</div>
<div style="left:595px;top:735.86px;width:600px;text-align:right;font-size:16.7px;line-height:16.7px;color:#000;font-weight:400;white-space:nowrap;">Subtotal</div>
<div style="left:719px;top:735.86px;width:600px;text-align:right;font-size:16.7px;line-height:16.7px;color:#000;font-weight:400;white-space:nowrap;">Total inc. tax</div>
<div style="left:1337px;top:735.86px;font-size:16.7px;line-height:16.7px;color:#000;font-weight:400;white-space:nowrap;">Resource</div>
<div style="left:1425px;top:0;width:87px;height:1014px;overflow:hidden"><div style="position:absolute;left:-1425px;top:0;width:1919px;height:1014px"><div style="position:absolute;left:1434px;top:735.86px;font-size:16.7px;line-height:16.7px;color:#000;font-weight:400;white-space:nowrap">Order #</div></div></div>
<div style="left:1521px;top:735.86px;font-size:16.7px;line-height:16.7px;color:#000;font-weight:400;white-space:nowrap;">Phase code</div>
<div style="left:1636px;top:735.86px;font-size:16.7px;line-height:16.7px;color:#000;font-weight:400;white-space:nowrap;">Phase wording</div>
<div style="left:1776px;top:735.86px;font-size:16.7px;line-height:16.7px;color:#000;font-weight:400;white-space:nowrap;">Sub-phase</div>
<div style="left:601px;top:935.63px;width:600px;text-align:right;font-size:15.2px;line-height:15.2px;color:#000;font-weight:700;white-space:nowrap;">0,00</div>
<div style="left:726px;top:935.63px;width:600px;text-align:right;font-size:15.2px;line-height:15.2px;color:#000;font-weight:700;white-space:nowrap;">0,00</div>
<div style="left:601px;top:962.13px;width:600px;text-align:right;font-size:15.2px;line-height:15.2px;color:#f68b0c;font-weight:700;white-space:nowrap;">0,00</div>
<div style="left:726px;top:962.13px;width:600px;text-align:right;font-size:15.2px;line-height:15.2px;color:#f68b0c;font-weight:700;white-space:nowrap;">0,00</div>
<div style="left:1630px;top:723px;width:135px;height:210px;border:2px solid #ff0000;box-sizing:border-box;box-shadow:2px 3px 4px rgba(0,0,0,0.28), inset 3px 3px 4px rgba(0,0,0,0.22)"></div>
<div style="left:0px;top:952px;width:1px;height:62px;background:#000"></div>
</body></html>
